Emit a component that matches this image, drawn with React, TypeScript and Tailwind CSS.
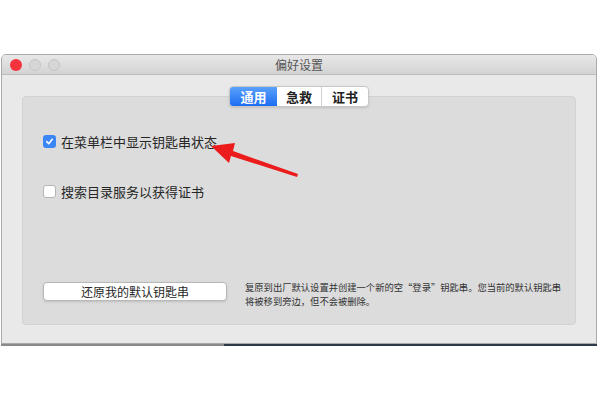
import React from 'react';

const FONT = '"Noto Sans CJK SC", "Noto Sans", sans-serif';

function Checkbox({checked}: {checked: boolean}) {
    if (checked) {
        return (
            <div className="flex h-[13px] w-[13px] items-center justify-center rounded-[3px] bg-[#3b86f5]">
                <svg width="9" height="9" viewBox="0 0 10 10">
                    <path d="M2 5.2 L4.2 7.4 L8 2.6" fill="none" stroke="white" strokeWidth="1.8" strokeLinecap="round" strokeLinejoin="round"/>
                </svg>
            </div>
        );
    }
    return <div className="h-[13px] w-[13px] rounded-[3px] border border-[#b5b5b5] bg-white"/>;
}

function App() {
    return (
        <div className="relative flex h-[400px] w-[600px] flex-col bg-white" style={{fontFamily: FONT}}>
            <div className="h-[54px]"/>
            <div className="ml-[1px] flex h-[290px] w-[596px] flex-col overflow-hidden rounded-t-[5px] border border-[#a9a9a9] bg-[#e9e9e9]">
                {/* title bar */}
                <div className="relative flex h-[20px] items-center border-b border-[#bdbdbd] bg-gradient-to-b from-[#e8e8e8] to-[#d3d3d3]">
                    <div className="flex items-center gap-[7px] pl-[8px]">
                        <div className="h-[12px] w-[12px] rounded-full bg-[#f5333d]"/>
                        <div className="h-[12px] w-[12px] rounded-full border border-[#c4c4c4] bg-[#d6d6d6]"/>
                        <div className="h-[12px] w-[12px] rounded-full border border-[#c4c4c4] bg-[#d6d6d6]"/>
                    </div>
                    <div className="absolute inset-0 flex items-center justify-center text-[12px] text-[#555]">
                        偏好设置
                    </div>
                </div>

                {/* content */}
                <div className="flex flex-1 flex-col px-[20px] pt-[11px]">
                    <div className="relative z-10 flex justify-center">
                        <div className="flex h-[21px] overflow-hidden rounded-[4px] border border-[#c8c8c8] bg-white text-[13px] font-semibold shadow-sm">
                            <div className="flex w-[47px] items-center justify-center bg-gradient-to-b from-[#5aa1fa] to-[#1b6cf2] text-white">通用</div>
                            <div className="flex w-[45px] items-center justify-center border-r border-[#d0d0d0] text-[#222]">急救</div>
                            <div className="flex w-[46px] items-center justify-center text-[#222]">证书</div>
                        </div>
                    </div>
                    <div className="-mt-[11px] flex h-[229px] flex-col rounded-[4px] border border-[#d2d2d2] bg-[#dcdcdc] pl-[20px] pr-[6px] pt-[35px]">
                        <div className="flex items-center gap-[5px] text-[13px] text-[#262626]">
                            <Checkbox checked={true}/>
                            <span>在菜单栏中显示钥匙串状态</span>
                        </div>
                        <div className="mt-[30px] flex items-center gap-[5px] text-[13px] text-[#262626]">
                            <Checkbox checked={false}/>
                            <span>搜索目录服务以获得证书</span>
                        </div>
                        <div className="mt-[80px] flex items-start gap-[18px]">
                            <div className="mt-[1px] flex h-[19px] w-[184px] shrink-0 items-center justify-center rounded-[4px] border border-[#b8b8b8] bg-white text-[12px] text-[#262626] shadow-sm">
                                还原我的默认钥匙串
                            </div>
                            <div className="-mt-[1px] flex shrink-0 flex-col whitespace-nowrap text-[9.3px] leading-[14px] text-[#333]">
                                <span>复原到出厂默认设置并创建一个新的空“登录”钥匙串。您当前的默认钥匙串</span>
                                <span>将被移到旁边，但不会被删除。</span>
                            </div>
                        </div>
                    </div>
                </div>
            </div>
            <div className="ml-[1px] flex h-[2px] w-[596px]">
                <div className="w-[223px] bg-[#8a8a8a]"/>
                <div className="flex-1 bg-[#2f3a48]"/>
            </div>

            {/* red annotation arrow */}
            <svg className="absolute left-0 top-0" width="600" height="400" viewBox="0 0 600 400">
                <path d="M298 174 L233 151 L235 143 L211 146 L229 163 L231 156 L297 177 Z" fill="#ec1c1c"/>
            </svg>
        </div>
    );
}

export default App;
